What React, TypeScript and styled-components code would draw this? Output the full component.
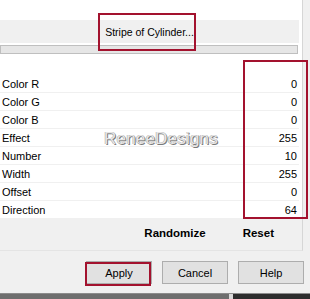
import React from "react";
import styled, { createGlobalStyle } from "styled-components";

const Global = createGlobalStyle`
  html, body { margin: 0; padding: 0; background: #f0f0f0; }
  body { font-family: "Liberation Sans", Arial, sans-serif; font-size: 11px; color: #000; }
`;

const Root = styled.div`
  position: relative;
  width: 310px;
  height: 299px;
  overflow: hidden;
  background: #f0f0f0;
  display: flex;
  flex-direction: column;
`;

const Panel = styled.div`
  width: 303px;
  height: 252px;
  background: #fff;
  border-right: 1px solid #d6d6d6;
  border-bottom: 1px solid #e4e4e4;
  box-sizing: border-box;
  display: flex;
  flex-direction: column;
`;

const TitleBand = styled.div`
  margin-top: 20px;
  width: 299px;
  height: 23px;
  background: #f0f0f0;
  display: flex;
  align-items: center;
  justify-content: center;
  font-size: 10.5px;
`;

const Strip = styled.div`
  margin-top: 2px;
  width: 298px;
  height: 9px;
  box-sizing: border-box;
  background: #e6e6e6;
  border: 1px solid #bfbfbf;
`;

const List = styled.div`
  position: relative;
  margin-top: 21px;
  width: 299px;
  display: flex;
  flex-direction: column;
`;

const Row = styled.div`
  height: 18px;
  box-sizing: border-box;
  border-bottom: 1px solid #f0f0f0;
  display: flex;
  align-items: center;
  justify-content: space-between;
  padding: 0 2px 0 2px;
  font-size: 11px;
`;

const Value = styled.span`
  padding-right: 0;
`;

const Watermark = styled.div`
  position: absolute;
  left: 104px;
  top: 54px;
  font-family: "Liberation Sans", Arial, sans-serif;
  font-size: 17px;
  letter-spacing: 0.2px;
  color: #e6e6e6;
  text-shadow: 1px 1px 0 #7a7a7a, -0.5px -0.5px 0 #a8a8a8, 0.5px -0.5px 0 #b0b0b0;
  pointer-events: none;
`;

const Footer = styled.div`
  flex: 1;
  background: #f0f0f0;
  display: flex;
  justify-content: flex-end;
  align-items: flex-start;
  gap: 37px;
  padding: 8px 28px 0 0;
  font-weight: bold;
  font-size: 11.5px;
`;

const ButtonBar = styled.div`
  height: 42px;
  display: flex;
  justify-content: flex-end;
  align-items: flex-start;
  gap: 10px;
  padding: 10px 6px 0 0;
  box-sizing: border-box;
`;

const Button = styled.div`
  width: 66px;
  height: 23px;
  box-sizing: border-box;
  background: #e1e1e1;
  border: 1px solid #adadad;
  display: flex;
  align-items: center;
  justify-content: center;
  font-size: 11px;
`;

const BottomBar = styled.div`
  height: 5px;
  display: flex;
  border-top: 1px solid #8c8c8c;
`;

const BarLeft = styled.div`
  width: 229px;
  background: #6e6e6e;
`;

const BarGap = styled.div`
  width: 4px;
  background: #d8d8d8;
`;

const BarRight = styled.div`
  flex: 1;
  background: #2d2d2d;
`;

const Mark = styled.div<{ $l: number; $t: number; $w: number; $h: number }>`
  position: absolute;
  left: ${(p) => p.$l}px;
  top: ${(p) => p.$t}px;
  width: ${(p) => p.$w}px;
  height: ${(p) => p.$h}px;
  box-sizing: border-box;
  border: 2px solid #a3122e;
  pointer-events: none;
`;

const rows: [string, string][] = [
  ["Color R", "0"],
  ["Color G", "0"],
  ["Color B", "0"],
  ["Effect", "255"],
  ["Number", "10"],
  ["Width", "255"],
  ["Offset", "0"],
  ["Direction", "64"],
];

export default function App() {
  return (
    <>
      <Global />
      <Root>
        <Panel>
          <TitleBand>Stripe of Cylinder...</TitleBand>
          <Strip />
          <List>
            {rows.map(([k, v]) => (
              <Row key={k}>
                <span>{k}</span>
                <Value>{v}</Value>
              </Row>
            ))}
            <Watermark>ReneeDesigns</Watermark>
          </List>
          <Footer>
            <span>Randomize</span>
            <span>Reset</span>
          </Footer>
        </Panel>
        <ButtonBar>
          <Button>Apply</Button>
          <Button>Cancel</Button>
          <Button>Help</Button>
        </ButtonBar>
        <BottomBar>
          <BarLeft />
          <BarGap />
          <BarRight />
        </BottomBar>
        <Mark $l={98} $t={13} $w={98} $h={38} />
        <Mark $l={243} $t={60} $w={65} $h={159} />
        <Mark $l={85} $t={262} $w={66} $h={24} />
      </Root>
    </>
  );
}
